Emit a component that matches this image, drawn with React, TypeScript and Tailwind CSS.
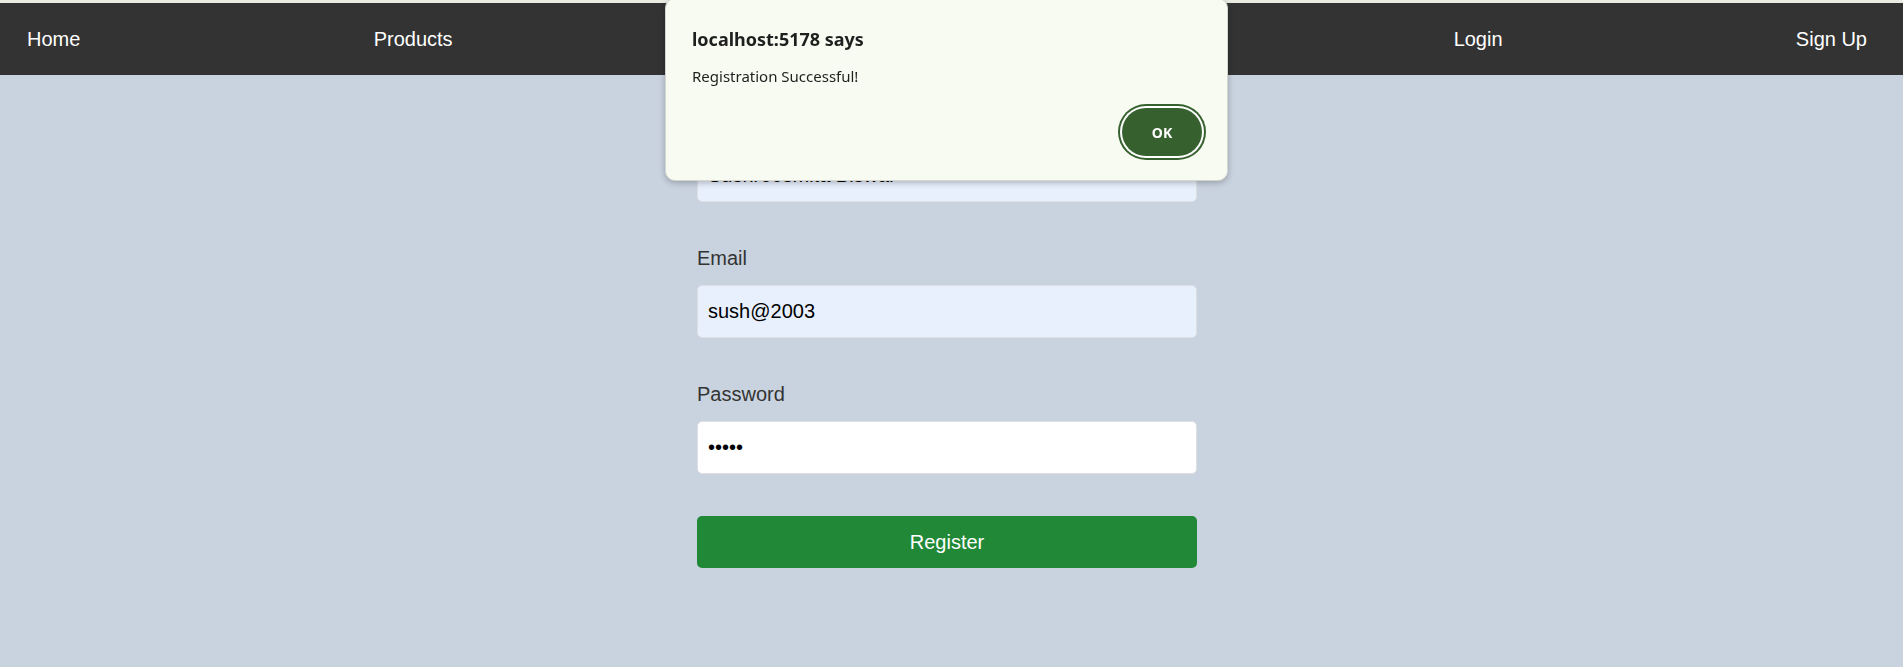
import type { JSX } from "react";

const navItems = ["Home", "Products", "About", "Contact", "Login", "Sign Up"];

const Navbar = (): JSX.Element => {
  return (
    <nav className="flex h-[72px] items-center justify-between bg-[#333333] pl-[27px] pr-[36px] text-[20px] text-white">
      {navItems.map((item) => (
        <a key={item} href="#" className="leading-[23px]">
          {item}
        </a>
      ))}
    </nav>
  );
};

const Field = ({
  label,
  type,
  value,
  filled,
}: {
  label: string;
  type: string;
  value: string;
  filled: boolean;
}): JSX.Element => {
  return (
    <div className="mb-[45px] flex flex-col">
      <label className="mb-[15px] text-[20px] leading-[23px] text-[#333333]">
        {label}
      </label>
      <input
        type={type}
        defaultValue={value}
        readOnly
        className={`h-[53px] w-full rounded-[5px] border border-[#dcdfe3] px-[10px] text-[20px] text-black outline-none ${
          filled ? "bg-[#e8f0fe]" : "bg-white"
        }`}
      />
    </div>
  );
};

const AlertDialog = (): JSX.Element => {
  return (
    <div className="fixed top-[-2px] left-[665px] w-[563px] rounded-[10px] border border-[#d4d6d0] bg-[#f8fbf1] pt-[28px] pr-[25px] pb-[24px] pl-[26px] font-['Noto_Sans',sans-serif] text-[#1f1f1f] shadow-[0_2px_6px_rgba(0,0,0,0.25)]">
      <div className="text-[18px] leading-[24px] font-bold">localhost:5178 says</div>
      <div className="mt-[15px] text-[15px] leading-[20px]">
        Registration Successful!
      </div>
      <div className="mt-[22px] flex justify-end">
        <button className="h-[48px] w-[80px] rounded-full bg-[#36612f] text-[14px] font-bold text-white shadow-[0_0_0_2px_#ffffff,0_0_0_4px_#36612f]">
          OK
        </button>
      </div>
    </div>
  );
};

export default function App(): JSX.Element {
  return (
    <div className="min-h-screen bg-[#c9d3df] pt-[3px] font-['Liberation_Sans',Arial,sans-serif]">
      <div className="fixed top-0 left-0 h-[3px] w-full bg-[#e9ece2]" />
      <Navbar />
      <main className="flex justify-center pt-[36px] pr-[9px]">
        <form className="flex w-[500px] flex-col">
          <Field label="Name" type="text" value="Sushreesmita Biswal" filled />
          <Field label="Email" type="text" value="sush@2003" filled />
          <Field label="Password" type="password" value="12345" filled={false} />
          <button
            type="button"
            className="-mt-[3px] h-[52px] w-full rounded-[5px] bg-[#218838] text-[20px] text-white"
          >
            Register
          </button>
        </form>
      </main>
      <AlertDialog />
    </div>
  );
}
